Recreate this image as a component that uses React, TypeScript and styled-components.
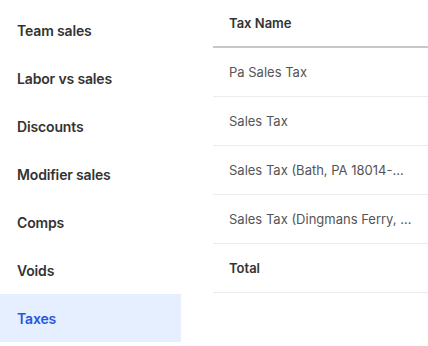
import React from "react";
import styled, { createGlobalStyle } from "styled-components";

const Global = createGlobalStyle`
  html, body { margin: 0; padding: 0; background: #fff; }
  body { font-family: Inter, "Noto Sans", sans-serif; -webkit-font-smoothing: antialiased; }
`;

const Page = styled.div`
  display: flex;
  align-items: flex-start;
  gap: 32px;
  width: 428px;
  height: 346px;
  overflow: hidden;
`;

const Nav = styled.nav`
  display: flex;
  flex-direction: column;
  width: 181px;
  padding-top: 6px;
  flex-shrink: 0;
`;

const NavItem = styled.div<{ $active?: boolean }>`
  height: 48px;
  display: flex;
  align-items: center;
  padding-left: 17px;
  font-size: 14px;
  font-weight: 600;
  letter-spacing: -0.15px;
  color: ${(p) => (p.$active ? "#2557e0" : "#333")};
  background: ${(p) => (p.$active ? "#e6efff" : "transparent")};
`;

const Table = styled.div`
  display: flex;
  flex-direction: column;
  width: 215px;
  flex-shrink: 0;
`;

const HeaderCell = styled.div`
  height: 46px;
  display: flex;
  align-items: center;
  padding: 0 16px;
  border-bottom: 2px solid #c8c8c8;
  font-size: 13px;
  font-weight: 600;
  color: #333;
`;

const Row = styled.div<{ $bold?: boolean }>`
  height: 48px;
  display: flex;
  align-items: center;
  padding: 0 16px;
  border-bottom: 1px solid #ececec;
  font-size: 13px;
  font-weight: ${(p) => (p.$bold ? 600 : 400)};
  color: ${(p) => (p.$bold ? "#333" : "#555")};
`;

const CellText = styled.span`
  white-space: nowrap;
  overflow: hidden;
  text-overflow: ellipsis;
  min-width: 0;
`;

const navItems = [
  "Team sales",
  "Labor vs sales",
  "Discounts",
  "Modifier sales",
  "Comps",
  "Voids",
  "Taxes",
];

const rows = [
  "Pa Sales Tax",
  "Sales Tax",
  "Sales Tax (Bath, PA 18014-Northampton)",
  "Sales Tax (Dingmans Ferry, PA 18328)",
];

export default function App() {
  return (
    <>
      <Global />
      <Page>
        <Nav>
          {navItems.map((n) => (
            <NavItem key={n} $active={n === "Taxes"}>
              {n}
            </NavItem>
          ))}
        </Nav>
        <Table>
          <HeaderCell>Tax Name</HeaderCell>
          {rows.map((r) => (
            <Row key={r} title={r}>
              <CellText>{r}</CellText>
            </Row>
          ))}
          <Row $bold>
            <CellText>Total</CellText>
          </Row>
        </Table>
      </Page>
    </>
  );
}
